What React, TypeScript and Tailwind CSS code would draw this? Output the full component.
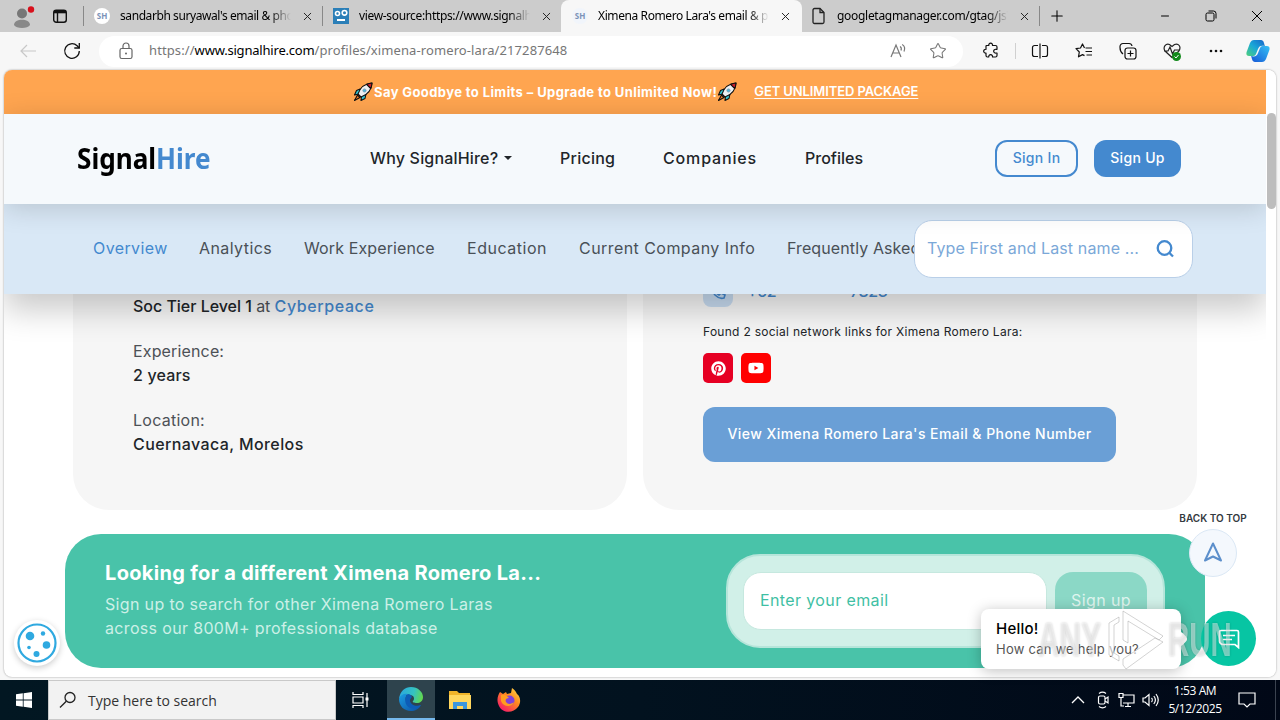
import { ReactNode } from "react";
import { Minus, Plus, Star, X } from "lucide-react";
import { FaPinterest, FaYoutube } from "react-icons/fa";
import clsx from "clsx";

interface TabProps {
  icon: ReactNode;
  title: string;
  titleClass: string;
  active?: boolean;
  className: string;
}

const subnavItems = [
  { label: "Overview", className: "w-[106px] text-[#4489cf] tracking-[0.4px]" },
  { label: "Analytics", className: "w-[105px] tracking-[0.42px]" },
  { label: "Work Experience", className: "w-[163px] tracking-[0.12px]" },
  { label: "Education", className: "w-[112px] tracking-[0.52px]" },
  { label: "Current Company Info", className: "w-[208px] tracking-[0.44px]" },
  { label: "Frequently Asked Questions", className: "tracking-[0.1px]" },
];

function Tab({ icon, title, titleClass, active, className }: TabProps) {
  return (
    <div
      className={clsx(
        "flex h-8 shrink-0 items-center",
        active ? "rounded-t-lg bg-[#f7f7f7]" : "bg-[#cccccc]",
        className
      )}
    >
      <span className="flex w-4 shrink-0 justify-center">{icon}</span>
      <span
        className={clsx(
          "ml-[10px] mr-1 min-w-0 flex-1 overflow-hidden whitespace-nowrap text-black [mask-image:linear-gradient(to_right,black_88%,transparent)]",
          titleClass
        )}
      >
        {title}
      </span>
      <X size={13} strokeWidth={1.8} className="ml-[6px] shrink-0 text-[#222]" />
    </div>
  );
}

function ShBadge({ className }: { className?: string }) {
  return (
    <span
      className={clsx(
        "flex size-4 shrink-0 items-center justify-center rounded-full text-[8px] font-bold text-[#7c93b8]",
        className
      )}
    >
      SH
    </span>
  );
}

function TabStrip() {
  return (
    <div className="flex h-8 shrink-0 items-center bg-[#cccccc] font-['Noto_Sans',sans-serif] text-[12px]">
      <svg width="28" height="24" viewBox="0 0 28 24" className="ml-2 mt-1 shrink-0">
        <circle cx="14" cy="7.500" r="5" fill="#777" />
        <path d="M6 19c0-7 16-7 16 0-2 4-14 4-16 0z" fill="#888" />
        <circle cx="23" cy="3.500" r="3.200" fill="#d8101c" />
      </svg>
      <svg width="16" height="16" viewBox="0 0 16 16" fill="none" stroke="#111" strokeWidth="1.4" className="ml-4 shrink-0">
        <rect x="1.7" y="2.2" width="12.6" height="12" rx="2.5" />
        <path d="M2 4h12" strokeWidth="2.6" />
        <path d="M5.500 4v10" />
      </svg>
      <span className="ml-[15px] h-5 w-px shrink-0 bg-[#888]" />
      <Tab
        icon={<ShBadge className="bg-white" />}
        title="sandarbh suryawal's email & phone"
        titleClass="tracking-[-0.42px]"
        className="w-[238px] pl-[10px] pr-2"
      />
      <span className="h-5 w-px shrink-0 bg-[#888]" />
      <Tab
        icon={
          <svg width="16" height="16" viewBox="0 0 16 16">
            <rect width="16" height="16" fill="#2b7fb8" />
            <circle cx="4.5" cy="5.5" r="2" fill="none" stroke="#fff" strokeWidth="1.6" />
            <circle cx="11.5" cy="4.8" r="2.3" fill="none" stroke="#fff" strokeWidth="1.6" />
            <path d="M4 12h8" stroke="#fff" strokeWidth="2" />
          </svg>
        }
        title="view-source:https://www.signalhire.com"
        titleClass="tracking-[-0.34px]"
        className="w-[238px] rounded-br-lg pl-[10px] pr-2"
      />
      <Tab
        active
        icon={<ShBadge className="bg-[#f1f5fb]" />}
        title="Ximena Romero Lara's email & phone"
        titleClass="tracking-[-0.4px]"
        className="w-[241px] pl-[11px] pr-[10px]"
      />
      <Tab
        icon={
          <svg width="16" height="18" viewBox="0 0 16 18" fill="none" stroke="#222" strokeWidth="1.3">
            <path d="M3.5 1.5h5.5l4 4v9.5a1.5 1.5 0 0 1-1.5 1.5h-8a1.5 1.5 0 0 1-1.500-1.500v-12a1.500 1.500 0 0 1 1.500-1.500z" />
            <path d="M9 1.500v4h4" />
          </svg>
        }
        title="googletagmanager.com/gtag/js?id"
        titleClass="tracking-[-0.3px]"
        className="w-[237px] pl-[9px] pr-2"
      />
      <span className="h-5 w-px shrink-0 bg-[#888]" />
      <Plus size={18} strokeWidth={1.4} className="ml-[8px] shrink-0 text-black" />
      <div className="ml-auto flex shrink-0 items-center gap-[34px] pr-[17px] text-black">
        <Minus size={12} strokeWidth={2} />
        <svg width="12" height="12" viewBox="0 0 12 12" fill="none" stroke="currentColor">
          <rect x="1" y="3" width="8" height="8" rx="1.5" />
          <path d="M3.500 1h5a2.500 2.500 0 0 1 2.500 2.500v5" />
        </svg>
        <svg width="12" height="12" viewBox="0 0 12 12" stroke="currentColor">
          <path d="M1 1l10 10M11 1L1 11" />
        </svg>
      </div>
    </div>
  );
}

function AddressBar() {
  return (
    <div className="flex h-[38px] shrink-0 items-center bg-[#f7f7f7]">
      <svg width="16" height="14" viewBox="0 0 16 14" fill="none" stroke="#c8c8c8" strokeWidth="1.2" className="ml-5">
        <path d="M16 7H1M7 1L1 7l6 6" />
      </svg>
      <svg width="18" height="18" viewBox="0 0 18 18" fill="none" stroke="#111" strokeWidth="1.300" className="ml-[27px]">
        <path d="M16.300 9a7.300 7.300 0 1 1-2.200-5.200L16 5.700" />
        <path d="M16.300 1v5h-5" />
      </svg>
      <div className="ml-[18px] flex h-[31px] w-[864px] items-center rounded-full bg-white pl-[19px] pr-4">
        <svg width="16" height="18" viewBox="0 0 16 18" fill="none" stroke="#666" strokeWidth="1.200">
          <rect x="2" y="6.500" width="12" height="10" rx="1.800" />
          <path d="M5 6.500V4a3 3 0 0 1 6 0v2.500" />
          <circle cx="8" cy="11.500" r="1" fill="#666" stroke="none" />
        </svg>
        <span className="ml-[15px] whitespace-nowrap font-['Noto_Sans',sans-serif] text-[13px] tracking-[0.1px] text-[#767676]">
          https://<span className="tracking-[-0.200px] text-black">www.signalhire.com</span>
          /profiles/ximena-romero-lara/217287648
        </span>
        <svg width="17" height="16" viewBox="0 0 17 16" fill="none" stroke="#777" strokeWidth="1.200" className="ml-auto">
          <path d="M1 14L6 2l5 12M3 10h6M10 3.500c1.500.8 1.500 2.500 1 4M12.200 1.500c2.600 1.500 2.800 4.500 1.800 7" />
        </svg>
        <Star size={18} strokeWidth={1.400} className="ml-[22px] text-[#777]" />
      </div>
      <svg width="18" height="18" viewBox="0 0 18 18" fill="none" stroke="#111" strokeWidth="1.200" strokeLinejoin="round" className="ml-[19px]">
        <path d="M4.500 3.500h2.300a1.900 1.900 0 1 1 3.700 0H13.500a1.500 1.500 0 0 1 1.500 1.500v2.300h-1a1.900 1.900 0 1 0 0 3.700h1v2.500a1.500 1.500 0 0 1-1.500 1.500h-3a1.900 1.900 0 1 0-3.700 0H5.500A1.500 1.500 0 0 1 4 13.500V11a1.900 1.900 0 1 1 0-3.700V4z" />
      </svg>
      <span className="ml-[15px] h-4 w-px bg-[#d0d0d0]" />
      <svg width="18" height="16" viewBox="0 0 18 16" fill="none" stroke="#111" strokeWidth="1.200" className="ml-[15px]">
        <path d="M7 2.500H3.500a2 2 0 0 0-2 2v7a2 2 0 0 0 2 2H7M11 2.500h3.500a2 2 0 0 1 2 2v7a2 2 0 0 1-2 2H11M9 .5v15" />
      </svg>
      <svg width="18" height="18" viewBox="0 0 18 18" fill="none" stroke="#111" strokeWidth="1.200" strokeLinejoin="round" className="ml-[26px]">
        <path d="M9.500 6L7.500 2 5.500 6 1 6.700l3.300 3.300-.8 4.800 4-2.200 2 1M10.500 6H17M10.500 9.500H17M11.500 13H17" />
      </svg>
      <svg width="18" height="18" viewBox="0 0 18 18" fill="none" stroke="#111" strokeWidth="1.200" className="ml-[26px]">
        <rect x="6" y="6" width="11" height="11" rx="2.500" />
        <path d="M11.500 8.500v6M8.500 11.500h6M4 12C2 10.500 1 8 1 5.500V4.500A3 3 0 0 1 4 1.500h6a3 3 0 0 1 3 2.500" />
      </svg>
      <span className="relative ml-[26px]">
        <svg width="18" height="16" viewBox="0 0 18 16" fill="none" stroke="#222" strokeWidth="1.200">
          <path d="M9 14.500L2 8C-.5 4 3 0 6.500 1.500L9 3.500l2.500-2c4-1.500 7 2 4.500 6.500L9 14.500zM1 8h4l2-4 2.500 7 2-4H16" />
        </svg>
        <span className="absolute -bottom-[2px] right-0 flex size-[9px] items-center justify-center rounded-full bg-[#138a1c]">
          <svg width="7" height="7" viewBox="0 0 7 7" fill="none" stroke="#fff">
            <path d="M1.500 3.500L3 5l2.500-3" />
          </svg>
        </span>
      </span>
      <svg width="14" height="4" viewBox="0 0 14 4" className="ml-[28px]" fill="#111">
        <circle cx="2" cy="2" r="1.300" />
        <circle cx="7" cy="2" r="1.300" />
        <circle cx="12" cy="2" r="1.300" />
      </svg>
      <svg width="24" height="24" viewBox="0 0 24 24" className="ml-[23px]">
        <defs>
          <linearGradient id="cp1" x1="0" y1="1" x2="1" y2="0">
            <stop offset="0" stopColor="#4fd07c" />
            <stop offset="0.5" stopColor="#19a7d8" />
            <stop offset="1" stopColor="#1763c9" />
          </linearGradient>
          <linearGradient id="cp2" x1="0" y1="1" x2="1" y2="0">
            <stop offset="0" stopColor="#1657d6" />
            <stop offset="1" stopColor="#35c1f5" />
          </linearGradient>
        </defs>
        <path d="M8 1h7c3 0 3 4 4 6-4-1-6 0-7 3l-2 5c-1 2-2 2-4 2H3c-3 0-3-3-2-5L4 4c1-2 2-3 4-3z" fill="url(#cp1)" />
        <path d="M16 23H9c-3 0-3-4-4-6 4 1 6 0 7-3l2-5c1-2 2-2 4-2h3c3 0 3 3 2 5l-3 8c-1 2-2 3-4 3z" fill="url(#cp2)" />
      </svg>
    </div>
  );
}

function Rocket() {
  return (
    <svg width="20" height="20" viewBox="0 0 20 20" strokeLinejoin="round" stroke="#111" strokeWidth="1.100">
      <path d="M7 7L3.500 8.500 1.500 13l4.500-1zM13 12l-1 4.500-4 2 .5-4.500z" fill="#31c5d2" />
      <path d="M4.500 13L1.500 18.500 7 15.500z" fill="#ff7b22" />
      <path d="M5 12C7 6 12 1.500 19 1c-.5 7-5 12-11 14z" fill="#eef1f3" />
      <path d="M13.500 2.400C15 1.600 17 1.100 19 1c-.1 2-.5 3.700-1.300 5.500z" fill="#c9202c" />
      <circle cx="11.500" cy="8.500" r="1.600" fill="#49b8dd" stroke="#7d98a8" strokeWidth="0.800" />
    </svg>
  );
}

function Banner() {
  return (
    <div className="flex h-11 shrink-0 items-center bg-[#ffa550] pl-[349px] text-white">
      <Rocket />
      <span className="ml-px mt-px whitespace-nowrap text-[13px] font-bold tracking-[0.4px]">
        Say Goodbye to Limits – Upgrade to Unlimited Now!
      </span>
      <Rocket />
      <span className="ml-[17px] whitespace-nowrap text-[13px] font-semibold tracking-[-0.1px] underline underline-offset-2">
        GET UNLIMITED PACKAGE
      </span>
    </div>
  );
}

function Header() {
  return (
    <header className="relative z-30 flex h-[90px] shrink-0 items-center bg-[#f5f9fc] pl-[73px] shadow-[0_4px_26px_rgba(0,0,0,0.16)]">
      <div className="w-[293px] pb-[3px]">
        <div className="w-[150px] origin-left scale-x-[0.9] font-['Noto_Sans',sans-serif] text-[29px] font-bold text-black">
          Signal<span className="text-[#4489cf]">Hire</span>
        </div>
      </div>
      <nav className="flex pb-[2px] text-[16px] font-medium text-[#212529]">
        <span className="flex w-[190px] items-center whitespace-nowrap tracking-[0.18px]">
          Why SignalHire?
          <span className="ml-[6px] border-x-4 border-t-4 border-x-transparent border-t-[#212529]" />
        </span>
        <span className="w-[103px] tracking-[0.25px]">Pricing</span>
        <span className="w-[142px] tracking-[0.85px]">Companies</span>
        <span className="w-[190px]">Profiles</span>
      </nav>
      <div className="flex gap-4 pb-[2px] text-[14px] font-medium tracking-[0.3px]">
        <button className="flex h-[37px] w-[83px] items-center justify-center rounded-xl border-2 border-[#4489cf] pb-px text-[#4489cf]">
          Sign In
        </button>
        <button className="flex h-[37px] w-[87px] items-center justify-center rounded-xl bg-[#4489cf] pb-[2px] text-white">
          Sign Up
        </button>
      </div>
    </header>
  );
}

function Subnav() {
  return (
    <div className="relative z-20 flex h-[90px] shrink-0 items-center bg-[#d9e8f6] pl-[89px] text-[#495057] shadow-[0_16px_32px_rgba(0,0,0,0.21)]">
      <div className="flex w-[821px] shrink-0 overflow-hidden whitespace-nowrap pb-[2px] text-[16px]">
        {subnavItems.map((item) => (
          <span key={item.label} className={clsx("shrink-0", item.className)}>
            {item.label}
          </span>
        ))}
      </div>
      <div className="flex h-[58px] w-[279px] shrink-0 items-center rounded-[18px] border border-[#b9cfe8] bg-white pl-3 pr-[17px]">
        <span className="whitespace-nowrap pb-[2px] text-[16px] tracking-[0.12px] text-[#7ba8d8]">
          Type First and Last name ...
        </span>
        <svg width="20" height="20" viewBox="0 0 20 20" fill="none" stroke="#4489cf" strokeWidth="2.300" className="ml-auto">
          <circle cx="9.500" cy="9" r="6.800" />
          <path d="M14.300 13.800L18 17.500" />
        </svg>
      </div>
    </div>
  );
}

function Cards() {
  return (
    <div className="flex h-[216px] shrink-0 gap-4 pl-[69px] text-[16px] text-[#4d5156]">
      <section className="w-[554px] rounded-b-[36px] bg-[#f6f6f6] pl-[60px] leading-6">
        <p className="font-medium tracking-[-0.02px] text-[#212529]">
          Soc Tier Level 1 <span className="font-normal text-[#4d5156]">at</span>{" "}
          <span className="tracking-[0.6px] text-[#4489cf]">Cyberpeace</span>
        </p>
        <p className="mt-[21px] tracking-[0.15px]">Experience:</p>
        <p className="font-medium tracking-[0.15px] text-[#212529]">2 years</p>
        <p className="mt-[21px] tracking-[0.25px]">Location:</p>
        <p className="font-medium tracking-[0.4px] text-[#212529]">Cuernavaca, Morelos</p>
      </section>
      <section className="w-[554px] rounded-b-[36px] bg-[#f6f6f6] pl-[60px]">
        <div className="-mt-[17px] flex h-[30px] items-center font-medium text-[#4489cf]">
          <span className="flex size-[30px] items-center justify-center rounded-lg bg-[#c8dcf1]">
            <svg width="16" height="16" viewBox="0 0 16 16" fill="none" stroke="currentColor" strokeWidth="1.600">
              <path d="M2 2l3-1 2 4-2 2c1 2 2 3 4 4l2-2 4 2-1 3C8 16 0 8 2 2z" />
            </svg>
          </span>
          <span className="mb-[2px] ml-[14px] w-[103px] tracking-[-0.4px]">+52</span>
          <span className="mb-[2px] tracking-[-0.4px]">7823</span>
        </div>
        <p className="mt-4 h-[18px] whitespace-nowrap text-[12px] leading-[18px] tracking-[0.28px] text-[#212529]">
          Found 2 social network links for Ximena Romero Lara:
        </p>
        <div className="mt-3 flex gap-2 text-white">
          <span className="flex size-[30px] items-center justify-center rounded-[5px] bg-[#e60023]">
            <FaPinterest size={15} />
          </span>
          <span className="flex size-[30px] items-center justify-center rounded-[5px] bg-[#ff0000]">
            <FaYoutube size={16} />
          </span>
        </div>
        <button className="mt-6 flex h-[55px] w-[413px] items-center justify-center whitespace-nowrap rounded-xl bg-[#6a9fd6] pb-[2px] text-[14px] font-medium tracking-[0.45px] text-white">
          View Ximena Romero Lara's Email & Phone Number
        </button>
      </section>
    </div>
  );
}

function SignupBanner() {
  return (
    <section className="ml-[61px] mt-6 flex h-[134px] w-[1140px] shrink-0 items-start rounded-[36px] bg-[#49c3a9] pl-10">
      <div className="w-[621px] pt-[24px]">
        <h2 className="text-[20px] font-bold leading-[30px] tracking-[0.32px] text-white">
          Looking for a different Ximena Romero La...
        </h2>
        <p className="mt-[4px] text-[16px] leading-6 tracking-[0.34px] text-[#cdf0e7]">
          Sign up to search for other Ximena Romero Laras
          <br />
          across our 800M+ professionals database
        </p>
      </div>
      <div className="mt-[20px] flex h-[94px] w-[439px] items-center gap-2 rounded-[34px] border-2 border-[#b6e5da] bg-[#d1f0e8] pl-[15px]">
        <div className="flex h-[58px] w-[304px] items-center rounded-[18px] border border-[#c6e8df] bg-white pb-[2px] pl-4 text-[16px] tracking-[0.38px] text-[#3fbfa4]">
          Enter your email
        </div>
        <button className="flex h-[58px] w-[92px] items-center justify-center rounded-[18px] bg-[#8bd8c6] pb-[2px] text-[16px] tracking-[0.4px] text-[#dff5ef]">
          Sign up
        </button>
      </div>
    </section>
  );
}

function FloatingWidgets() {
  return (
    <div className="absolute inset-0 z-40">
      <div className="absolute left-[14px] top-[620px] flex size-[46px] items-center justify-center rounded-full bg-white shadow-[0_2px_6px_rgba(0,0,0,0.2)]">
        <svg width="40" height="40" viewBox="0 0 40 40" fill="#2fa9e0">
          <circle cx="20" cy="20" r="18.500" fill="#fff" stroke="#2fa9e0" strokeWidth="2.200" />
          <circle cx="13" cy="13" r="4.300" />
          <circle cx="26" cy="10.500" r="2.200" />
          <circle cx="29.500" cy="22" r="3.800" />
          <circle cx="12" cy="24.500" r="1.800" />
          <circle cx="19.500" cy="31" r="3" />
        </svg>
      </div>

      <div className="absolute left-[1178px] top-[511px] flex w-[70px] flex-col items-center">
        <span className="whitespace-nowrap text-[10px] font-semibold leading-[15px] text-[#343a40]">
          BACK TO TOP
        </span>
        <span className="mt-[3px] flex size-12 items-center justify-center rounded-full border border-[#dbe8f5] bg-[#f4f8fd]">
          <svg width="20" height="20" viewBox="0 0 20 20" fill="none" stroke="#5c8fcb" strokeWidth="2" strokeLinejoin="round" className="mb-[2px]">
            <path d="M10 1.500l8 17-8-4-8 4z" />
          </svg>
        </span>
      </div>

      <div className="absolute left-[1201px] top-[611px] flex size-[55px] items-center justify-center rounded-full bg-[#07c5a3] text-white">
        <svg width="22" height="20" viewBox="0 0 22 20" fill="none" stroke="currentColor" strokeWidth="1.700">
          <path d="M3 1.500h16a1.500 1.500 0 0 1 1.500 1.500v15.500L17 15.500H5A3.500 3.500 0 0 1 1.500 12V3A1.500 1.500 0 0 1 3 1.500zM5 6.500h12M5 10.500h9" />
        </svg>
      </div>
      <div className="absolute left-[981px] top-[609px] h-[60px] w-[200px] rounded-lg bg-white pl-[15px] pt-[9px] shadow-[0_2px_14px_rgba(0,0,0,0.25)]">
        <p className="text-[15px] font-medium leading-[22px] tracking-[0.25px] text-black">Hello!</p>
        <p className="whitespace-nowrap text-[13px] leading-[18px] tracking-[0.22px] text-[#555]">
          How can we help you?
        </p>
        <span className="absolute -right-[5px] top-[24px] size-3 rotate-45 rounded-sm bg-white" />
      </div>

      {/* watermark */}
      <div className="absolute left-[1038px] top-[610px] flex h-[60px] items-center font-['Liberation_Sans',sans-serif] text-[49px] font-bold text-white/45 [text-shadow:0_0_3px_rgba(0,0,0,0.2)]">
        <span className="w-[70px] origin-left scale-x-[0.61]">ANY</span>
        <svg width="58" height="62" viewBox="0 0 58 62" fill="rgba(255,255,255,0.6)" stroke="rgba(130,130,130,0.35)" strokeWidth="1" strokeLinejoin="round">
          <path d="M1 14l10-6v5l-5 3v28l5 3v5L1 46z" />
          <path d="M15 2l40 25-4 4-31-19v22l-5-3z" />
          <path d="M55 33L18 60l-3-4v-6l32-21z" />
        </svg>
        <span className="ml-[2px] w-[66px] origin-left scale-x-[0.6]">RUN</span>
      </div>
    </div>
  );
}

function Taskbar() {
  return (
    <div className="flex h-10 shrink-0 bg-[linear-gradient(to_right,#021722,#02121f_50%,#010817)] font-['Open_Sans',sans-serif] text-white">
      <div className="flex w-12 items-center justify-center">
        <svg width="16" height="16" viewBox="0 0 16 16" fill="#fff">
          <path d="M0 2.200l6.800-.9v6.300H0zM7.600 1.200L16 0v7.600H7.600zM0 8.400h6.800v6.300L0 13.800zM7.600 8.400H16V16l-8.400-1.200z" />
        </svg>
      </div>
      <div className="flex w-[288px] items-center border border-[#c9c9c9] bg-[#f2f2f2] pl-[10px] text-[#333]">
        <svg width="18" height="18" viewBox="0 0 18 18" fill="none" stroke="#222" strokeWidth="1.300">
          <circle cx="11" cy="6.500" r="5" />
          <path d="M7.300 10.200L1 16.500" />
        </svg>
        <span className="ml-[11px] text-[14px]">Type here to search</span>
      </div>
      <div className="flex w-[51px] items-center justify-center pr-[3px]">
        <svg width="18" height="18" viewBox="0 0 18 18" fill="none" stroke="#fff" strokeWidth="1.200">
          <path d="M2 1v2.500h10V1M2 17v-2.500h10V17M2 6h10v6H2zM16 2v14" />
          <path d="M14.500 6.500h3v3h-3z" fill="#fff" stroke="none" />
        </svg>
      </div>
      <div className="flex w-12 items-center justify-center border-b-2 border-[#76b9ed] bg-[#2e434d]">
        <svg width="24" height="24" viewBox="0 0 24 24">
          <defs>
            <linearGradient id="edgeTop" x1="0" y1="0.300" x2="1" y2="0.500">
              <stop offset="0" stopColor="#2aa7df" />
              <stop offset="0.600" stopColor="#35c3c1" />
              <stop offset="1" stopColor="#62d84f" />
            </linearGradient>
            <linearGradient id="edgeBody" x1="0" y1="0" x2="1" y2="1">
              <stop offset="0" stopColor="#1b9de2" />
              <stop offset="1" stopColor="#0c4fa3" />
            </linearGradient>
          </defs>
          <path d="M0 12C1 4 6 0 12 0c7 0 12 5 12 10 0 4-3 6-6 6-3 0-5-1-4-2 2-2 1-6-3-6-5-1-9 0-11 4z" fill="url(#edgeTop)" />
          <path d="M0 12c1-4 5-6 9-5-3 2-3 6-1 9 3 4 9 5 14 2-2 4-6 6-10 6C5 24 0 19 0 12z" fill="url(#edgeBody)" />
          <path d="M9 7c-4 3-4 11 2 14 4 2 9 0 11-3-5 2-10 0-11-4 0-2 1-3 2-4-1-2-2-3-4-3z" fill="#0d5cb6" />
        </svg>
      </div>
      <div className="flex w-[49px] items-center justify-center">
        <svg width="22" height="20" viewBox="0 0 22 20">
          <path d="M0 1h8l2 2h11v16H0z" fill="#f0b429" />
          <path d="M0 5h22v14H0z" fill="#ffd75e" />
          <path d="M4 19v-7h14v7h-4v-3H8v3z" fill="#3b96dd" />
        </svg>
      </div>
      <div className="flex w-[49px] items-center justify-center">
        <svg width="24" height="24" viewBox="0 0 24 24">
          <defs>
            <linearGradient id="fox" x1="1" y1="0" x2="0.200" y2="1">
              <stop offset="0" stopColor="#ffe24a" />
              <stop offset="0.450" stopColor="#ff8a1f" />
              <stop offset="1" stopColor="#f5156c" />
            </linearGradient>
          </defs>
          <path d="M3 4l3 2 3-2 1 2 4-1 1-5c3 2 4 4 5 6 4 3 4 9 1 13-5 7-16 6-19-1C-1 12 1 7 3 4z" fill="url(#fox)" />
          <circle cx="12.500" cy="12.500" r="5" fill="#8142d8" />
          <path d="M4 7c4-1 6 1 8 3-3 0-4 2-3 4 2 3 6 2 8 0-2 6-11 5-13-1z" fill="#ff9d20" />
        </svg>
      </div>
      <div className="ml-auto flex items-center">
        <svg width="14" height="8" viewBox="0 0 14 8" fill="none" stroke="#fff" strokeWidth="1.300">
          <path d="M1 7l6-6 6 6" />
        </svg>
        <svg width="12" height="18" viewBox="0 0 12 18" fill="none" stroke="#fff" strokeWidth="1.200" className="ml-[12px]">
          <rect x="1.500" y="5" width="6.500" height="8" rx="1.500" />
          <path d="M8 8l3-2v6L8 10M2 2.500c2-1.500 5-1.500 7 0M2 15.500c2 1.500 5 1.500 7 0" />
        </svg>
        <svg width="17" height="16" viewBox="0 0 17 16" fill="none" stroke="#fff" strokeWidth="1.200" className="ml-[9px]">
          <path d="M5 3h11v8H5M1 1.500h4v4H1zM3 5.500V14h3M10 11v3M7 14.500h6" />
        </svg>
        <svg width="17" height="14" viewBox="0 0 17 14" fill="none" stroke="#fff" strokeWidth="1.200" className="ml-[7px]">
          <path d="M1 5h2l4-3.500v11L3 9H1zM9.500 5c1 1 1 3 0 4M11.800 3c2 2.500 2 5.500 0 8M14 1c3 4 3 8 0 12" />
        </svg>
        <div className="ml-[8px] w-[56px] text-center text-[12px] leading-[18px] tracking-[-0.400px]">
          <div>1:53 AM</div>
          <div>5/12/2025</div>
        </div>
        <svg width="18" height="18" viewBox="0 0 18 18" fill="none" stroke="#fff" strokeWidth="1.200" className="ml-[15px]">
          <path d="M1 2h16v11h-5l-3 3-3-3H1z" />
        </svg>
        <span className="ml-[19px] mr-1 h-10 w-px bg-[#3b4350]" />
      </div>
    </div>
  );
}

export default function App() {
  return (
    <div className="relative flex h-[720px] w-[1280px] flex-col overflow-hidden bg-[#f7f7f7] font-['Inter',sans-serif]">
      <TabStrip />
      <AddressBar />
      <div className="mx-1 flex h-[607px] shrink-0 overflow-hidden rounded-lg bg-white shadow-[0_0_2px_rgba(0,0,0,0.4)]">
        <main className="flex w-[1262px] shrink-0 flex-col overflow-hidden">
          <Banner />
          <Header />
          <Subnav />
          <Cards />
          <SignupBanner />
        </main>
        <div className="w-[10px] bg-white pt-[43px]">
          <div className="ml-px h-24 w-[9px] rounded-full bg-[#bdbdbd]" />
        </div>
      </div>
      <div className="h-[3px] shrink-0" />
      <Taskbar />
      <FloatingWidgets />
    </div>
  );
}
